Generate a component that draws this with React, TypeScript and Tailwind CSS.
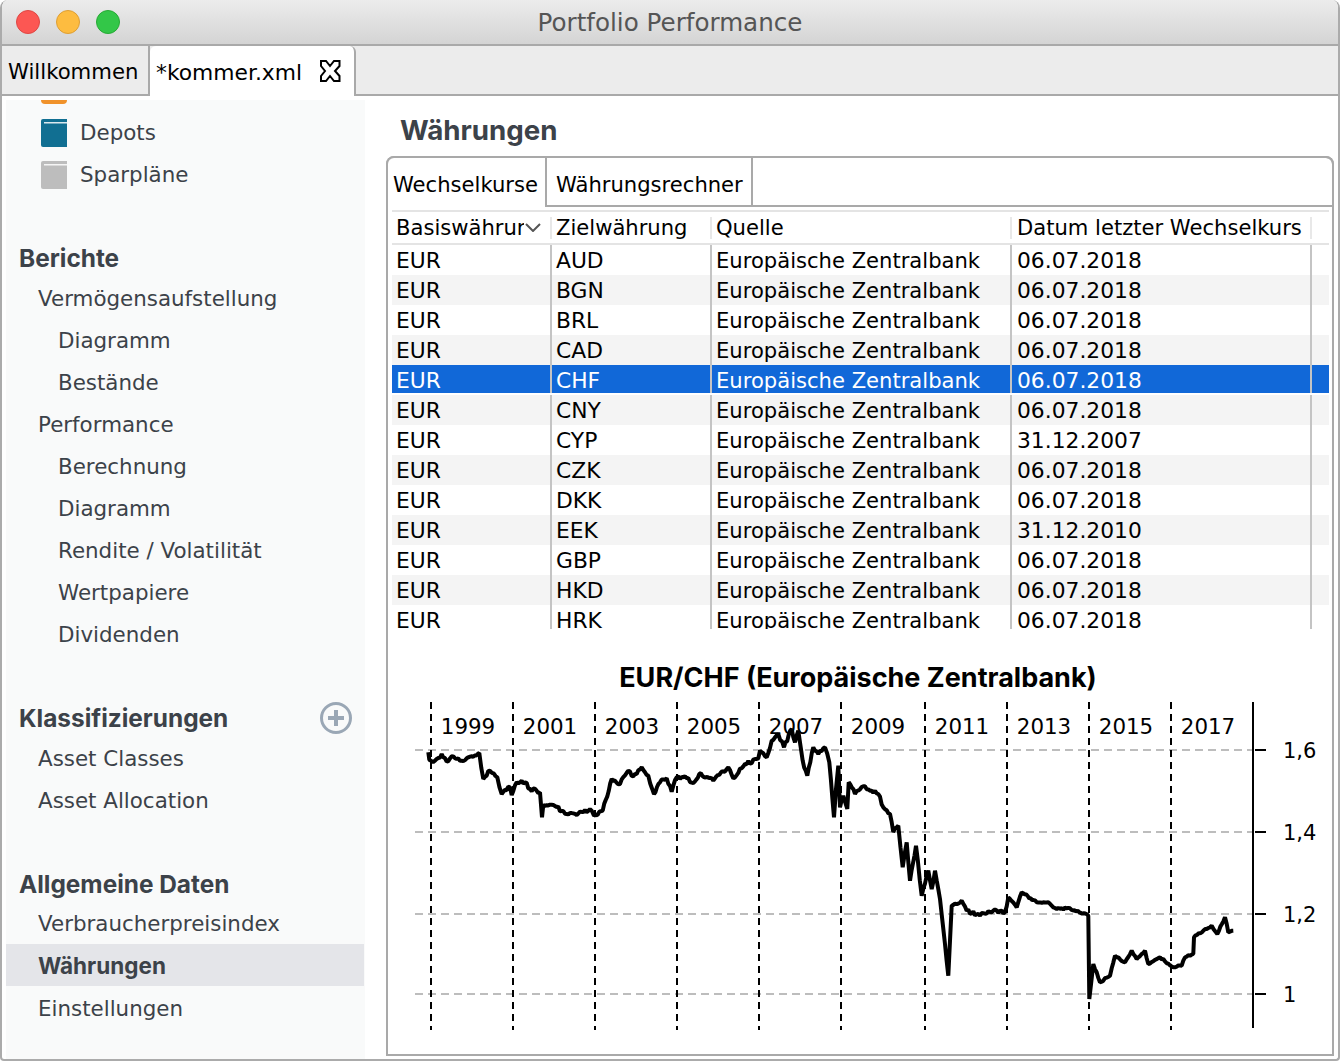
import React from "react";

const dejavu = "font-['DejaVu_Sans',sans-serif]";

const rows = [
  ["EUR", "AUD", "06.07.2018"],
  ["EUR", "BGN", "06.07.2018"],
  ["EUR", "BRL", "06.07.2018"],
  ["EUR", "CAD", "06.07.2018"],
  ["EUR", "CHF", "06.07.2018"],
  ["EUR", "CNY", "06.07.2018"],
  ["EUR", "CYP", "31.12.2007"],
  ["EUR", "CZK", "06.07.2018"],
  ["EUR", "DKK", "06.07.2018"],
  ["EUR", "EEK", "31.12.2010"],
  ["EUR", "GBP", "06.07.2018"],
  ["EUR", "HKD", "06.07.2018"],
  ["EUR", "HRK", "06.07.2018"],
];

// traced from the picture
const left: number[][] = [
  [55, 160], [58, 182], [75, 185], [95, 165], [110, 188], [125, 172], [155, 185], [185, 172], [208, 162], [220, 240],
  [240, 215], [262, 235], [275, 285], [300, 265], [305, 288], [320, 250], [345, 250], [360, 270], [390, 280], [396, 355],
  [400, 318], [430, 318], [470, 345], [500, 348], [540, 330], [552, 350], [578, 335], [605, 240], [630, 255], [655, 215],
  [670, 232], [695, 205], [715, 230], [732, 285], [750, 250], [770, 238], [785, 278], [800, 235], [830, 238], [850, 252],
  [868, 225], [910, 245], [955, 205], [970, 238], [1005, 195], [1045, 178], [1050, 155], [1070, 175], [1085, 125], [1105, 105],
  [1122, 145], [1145, 90], [1155, 130], [1165, 95], [1178, 185], [1192, 230], [1210, 145], [1225, 165], [1245, 145], [1258, 190],
  [1272, 355], [1278, 270], [1285, 200], [1290, 325], [1300, 290], [1312, 330], [1316, 250], [1335, 285], [1365, 262], [1380, 275],
];
const right: number[][] = [
  [55, 285], [70, 325], [90, 345], [100, 400], [115, 380], [128, 505], [140, 430], [150, 545], [168, 440],
  [185, 590], [205, 515], [215, 570], [225, 515], [240, 600], [265, 830], [275, 620], [305, 605], [320, 635], [360, 650],
  [400, 635], [435, 640], [445, 595], [470, 625], [485, 580], [530, 610], [565, 610], [590, 630], [630, 628], [685, 650],
  [688, 900], [700, 795], [720, 850], [750, 830], [765, 770], [795, 790], [815, 755], [830, 780], [855, 755], [865, 795],
  [900, 775], [940, 805], [965, 800], [975, 775], [1000, 765], [1002, 715], [1030, 695], [1055, 680], [1072, 705], [1095, 655],
  [1105, 700], [1120, 695],
];
const traced = [
  ...left.map(([x, y]) => [410 + x / 3, 700 + y / 3]),
  ...right.map(([x, y]) => [860 + x / 3, 700 + y / 3]),
];

// daily quotes wobble, so break the long segments up a bit
function buildLine() {
  let seed = 17;
  const noise = () => {
    seed = (seed * 16807) % 2147483647;
    return (seed % 1000) / 1000 - 0.5;
  };
  const out: string[] = [];
  traced.forEach(([x, y], i) => {
    if (i > 0) {
      const [px, py] = traced[i - 1];
      const steps = Math.floor((x - px) / 1.5);
      for (let s = 1; s < steps; s++) {
        const t = s / steps;
        out.push(`L${(px + (x - px) * t).toFixed(1)} ${(py + (y - py) * t + noise() * (x < 1010 ? 4 : 2)).toFixed(1)}`);
      }
    }
    out.push(`${i ? "L" : "M"}${x.toFixed(1)} ${y.toFixed(1)}`);
  });
  return out.join(" ");
}
const linePath = buildLine();

const yearLines = [431, 513, 595, 677, 759, 841, 925, 1007, 1089, 1171];
const years = ["1999", "2001", "2003", "2005", "2007", "2009", "2011", "2013", "2015", "2017"];
const levels: [number, string][] = [[751, "1,6"], [833, "1,4"], [915, "1,2"], [995, "1"]];

function Chart() {
  // viewBox uses page coordinates so the trace above can be read directly
  return (
    <svg viewBox="388 640 944 400" className="w-[944px] h-[400px] block mt-[10px]">
      <text x="858" y="688" textAnchor="middle" fontFamily="Inter" fontWeight="700" fontSize="27" fill="#000">
        EUR/CHF (Europäische Zentralbank)
      </text>
      {levels.map(([y]) => (
        <line key={y} x1="415" x2="1252" y1={y} y2={y} stroke="#bdbdbd" strokeWidth="2" strokeDasharray="8 5" />
      ))}
      {yearLines.map((x) => (
        <line key={x} x1={x} x2={x} y1="703" y2="1031" stroke="#000" strokeWidth="2" strokeDasharray="7 5" />
      ))}
      {years.map((y, i) => (
        <text key={y} x={yearLines[i] + 37} y="735" textAnchor="middle" fontFamily="DejaVu Sans" fontSize="21.400" fill="#000">
          {y}
        </text>
      ))}
      <line x1="1253" x2="1253" y1="703" y2="1029" stroke="#000" strokeWidth="2" />
      {levels.map(([y, label]) => (
        <g key={label}>
          <line x1="1255" x2="1266" y1={y} y2={y} stroke="#000" strokeWidth="2" />
          <text x="1283" y={y + 8} fontFamily="DejaVu Sans" fontSize="21" fill="#000">
            {label}
          </text>
        </g>
      ))}
      <path d={linePath} fill="none" stroke="#000" strokeWidth="4" strokeLinejoin="bevel" />
    </svg>
  );
}

function Book({ color }: { color: string }) {
  return (
    <svg width="26" height="28" viewBox="0 0 26 28" className="shrink-0">
      <path d="M2 0H26V28H2Q0 28 0 26V2Q0 0 2 0Z" fill={color} />
      <rect x="3" y="3" width="23" height="1.5" fill="#fff" opacity="0.85" />
    </svg>
  );
}

function Heading({ children }: { children: React.ReactNode }) {
  return (
    <div className="h-[40px] flex items-center pl-[13px] font-['Inter',sans-serif] font-bold text-[24.4px] text-[#3c4249]">
      {children}
    </div>
  );
}

function Item({ children, level = 1 }: { children: React.ReactNode; level?: number }) {
  return (
    <div className={`h-[42px] flex items-center text-[21.4px] text-[#3c4249] ${level === 2 ? "pl-[52px]" : "pl-[32px]"}`}>
      {children}
    </div>
  );
}

function Sidebar() {
  return (
    <div className={`w-[359px] ml-1 mt-1 shrink-0 bg-[#f9fafa] ${dejavu} overflow-hidden`}>
      <div className="ml-[35px] w-[26px] h-1 bg-[#f0922b] rounded-b-sm" />
      <div className="h-[42px] mt-2 flex items-center gap-[13px] pl-[35px] text-[21.4px] text-[#3c4249]">
        <Book color="#116f92" />
        Depots
      </div>
      <div className="h-[42px] flex items-center gap-[13px] pl-[35px] text-[21.4px] text-[#3c4249]">
        <Book color="#bdbdbd" />
        Sparpläne
      </div>
      <div className="mt-[42px]">
        <Heading>Berichte</Heading>
      </div>
      <Item>Vermögensaufstellung</Item>
      <Item level={2}>Diagramm</Item>
      <Item level={2}>Bestände</Item>
      <Item>Performance</Item>
      <Item level={2}>Berechnung</Item>
      <Item level={2}>Diagramm</Item>
      <Item level={2}>Rendite / Volatilität</Item>
      <Item level={2}>Wertpapiere</Item>
      <Item level={2}>Dividenden</Item>
      <div className="mt-[42px] flex items-center justify-between pr-[13px]">
        <Heading>Klassifizierungen</Heading>
        <svg width="32" height="32" viewBox="0 0 32 32">
          <circle cx="16" cy="16" r="14.5" fill="none" stroke="#9aa7b5" strokeWidth="3" />
          <path d="M16 8V24M8 16H24" stroke="#9aa7b5" strokeWidth="4" />
        </svg>
      </div>
      <Item>Asset Classes</Item>
      <Item>Asset Allocation</Item>
      <div className="mt-[42px]">
        <Heading>Allgemeine Daten</Heading>
      </div>
      <div className="h-[40px] flex items-center pl-[32px] text-[21.4px] text-[#3c4249]">Verbraucherpreisindex</div>
      <div className="h-[42px] pt-[2px] mr-px flex items-center pl-[32px] bg-[#e4e5e9] font-['Inter',sans-serif] font-bold text-[22.5px] text-[#3c4249]">
        Währungen
      </div>
      <div className="mt-[2px]">
        <Item>Einstellungen</Item>
      </div>
    </div>
  );
}

const cols = "grid grid-cols-[158px_160px_300px_300px_1fr]";

function Table() {
  return (
    <div className={`ml-1 mr-[3px] mt-[3px] ${dejavu} text-[21.1px] text-black h-[419px] overflow-hidden`}>
      <div className={`${cols} h-[35px] border-y-2 border-[#e4e4e4] items-center`}>
        <div className="pl-1 flex items-center gap-[1px] overflow-hidden whitespace-nowrap h-full">
          <span className="w-[128px] overflow-hidden shrink-0">Basiswährung</span>
          <svg width="16" height="9" viewBox="0 0 16 9" className="shrink-0">
            <path d="M1 1L8 8L15 1" fill="none" stroke="#555" strokeWidth="2" />
          </svg>
        </div>
        <div className="pl-1 border-l-2 border-[#e8e8e8] h-[22px] flex items-center">Zielwährung</div>
        <div className="pl-1 border-l-2 border-[#e8e8e8] h-[22px] flex items-center">Quelle</div>
        <div className="pl-[5px] border-l-2 border-[#e8e8e8] h-[22px] flex items-center whitespace-nowrap">Datum letzter Wechselkurs</div>
        <div className="border-l-2 border-[#e8e8e8] h-[22px]" />
      </div>
      {rows.map(([base, target, date], i) => {
        const selected = target === "CHF";
        const bg = selected ? "bg-[#1168d8] text-white h-[28px]" : i % 2 === 1 ? "bg-[#f4f4f4]" : "bg-white";
        const codePad = selected ? "pt-1" : "";
        const namePad = selected ? "pt-[3px]" : "pb-[2px]";
        return (
          <div key={target} className={`${cols} h-[30px]`}>
            <div className={`pl-1 flex items-center text-[21.8px] ${codePad} ${bg}`}>{base}</div>
            <div className={`pl-1 flex items-center text-[21.8px] border-l-2 border-[#c4c4c4] ${codePad} ${bg}`}>{target}</div>
            <div className={`pl-1 flex items-center border-l-2 border-[#c4c4c4] whitespace-nowrap ${namePad} ${bg}`}>Europäische Zentralbank</div>
            <div className={`pl-[5px] flex items-center text-[21.8px] border-l-2 border-[#c4c4c4] ${codePad} ${bg}`}>{date}</div>
            <div className={`border-l-2 border-[#c4c4c4] ${bg}`} />
          </div>
        );
      })}
    </div>
  );
}

function Main() {
  return (
    <div className="flex-1 min-w-0 flex flex-col pl-[21px] pr-1 pb-[3px]">
      <div className="h-[60px] pl-[14px] pt-[10px] flex items-center font-['Inter',sans-serif] font-bold text-[27.7px] text-[#3c4249]">
        Währungen
      </div>
      <div className="flex-1 border-2 border-[#a9a9a9] rounded-t-lg bg-white flex flex-col">
        <div className={`flex h-[51px] ${dejavu} text-[21.1px] text-black border-b-2 border-[#a9a9a9] -mx-[2px] -mt-[2px]`}>
          <div className="w-[161px] h-[51px] pt-1 border-2 border-b-0 border-[#a9a9a9] rounded-tl-lg flex items-center pl-[5px] bg-white z-10 shrink-0">
            Wechselkurse
          </div>
          <div className="w-[207px] h-[49px] pt-[6px] flex items-center pl-[10px] border-t-2 border-r-2 border-[#a9a9a9] shrink-0 -ml-[1px]">
            Währungsrechner
          </div>
          <div className="flex-1 border-t-2 border-r-2 border-[#a9a9a9] rounded-tr-lg" />
        </div>
        <Table />
        <Chart />
      </div>
    </div>
  );
}

export default function App() {
  return (
    <div className="w-[1340px] h-[1062px] overflow-hidden bg-white">
      <div className="h-[1061px] w-[1340px] rounded-t-lg rounded-b-sm border-x-2 border-b-2 border-[#ababab] flex flex-col overflow-hidden bg-white">
        <div className="h-[44px] shrink-0 -mx-[2px] bg-gradient-to-b from-[#ececec] to-[#d4d4d4] flex items-center relative">
          <div className="flex gap-4 pl-[16px]">
            <div className="w-6 h-6 rounded-full bg-[#fc5753] border border-[#df4744]" />
            <div className="w-6 h-6 rounded-full bg-[#fdbc40] border border-[#de9f34]" />
            <div className="w-6 h-6 rounded-full bg-[#33c748] border border-[#27aa35]" />
          </div>
          <div className={`absolute inset-0 pt-[2px] flex items-center justify-center ${dejavu} text-[24.6px] text-[#555]`}>
            Portfolio Performance
          </div>
        </div>
        <div className={`h-[52px] shrink-0 bg-[#ececec] border-t-2 border-b-2 border-[#a9a9a9] flex ${dejavu} text-[21.2px] text-black`}>
          <div className="w-[148px] pt-1 flex items-center pl-[6px] border-r-2 border-[#a9a9a9] whitespace-nowrap">Willkommen</div>
          <div className="w-[206px] h-[50px] pt-1 -mb-[2px] bg-white border-r-2 border-[#a9a9a9] rounded-t-md flex items-center pl-[6px] gap-[17px] whitespace-nowrap text-[21.8px]">
            *kommer.xml
            <svg width="22" height="22" viewBox="0 0 22 22" className="-mt-1">
              <path
                d="M2 1H7L11 6L15 1H20.500V6L16 11L20.500 16V21H15L11 16L7 21H2V16L6 11L2 6Z"
                fill="#fff"
                stroke="#000"
                strokeWidth="2"
              />
            </svg>
          </div>
        </div>
        <div className="flex-1 flex min-h-0">
          <Sidebar />
          <Main />
        </div>
      </div>
    </div>
  );
}
